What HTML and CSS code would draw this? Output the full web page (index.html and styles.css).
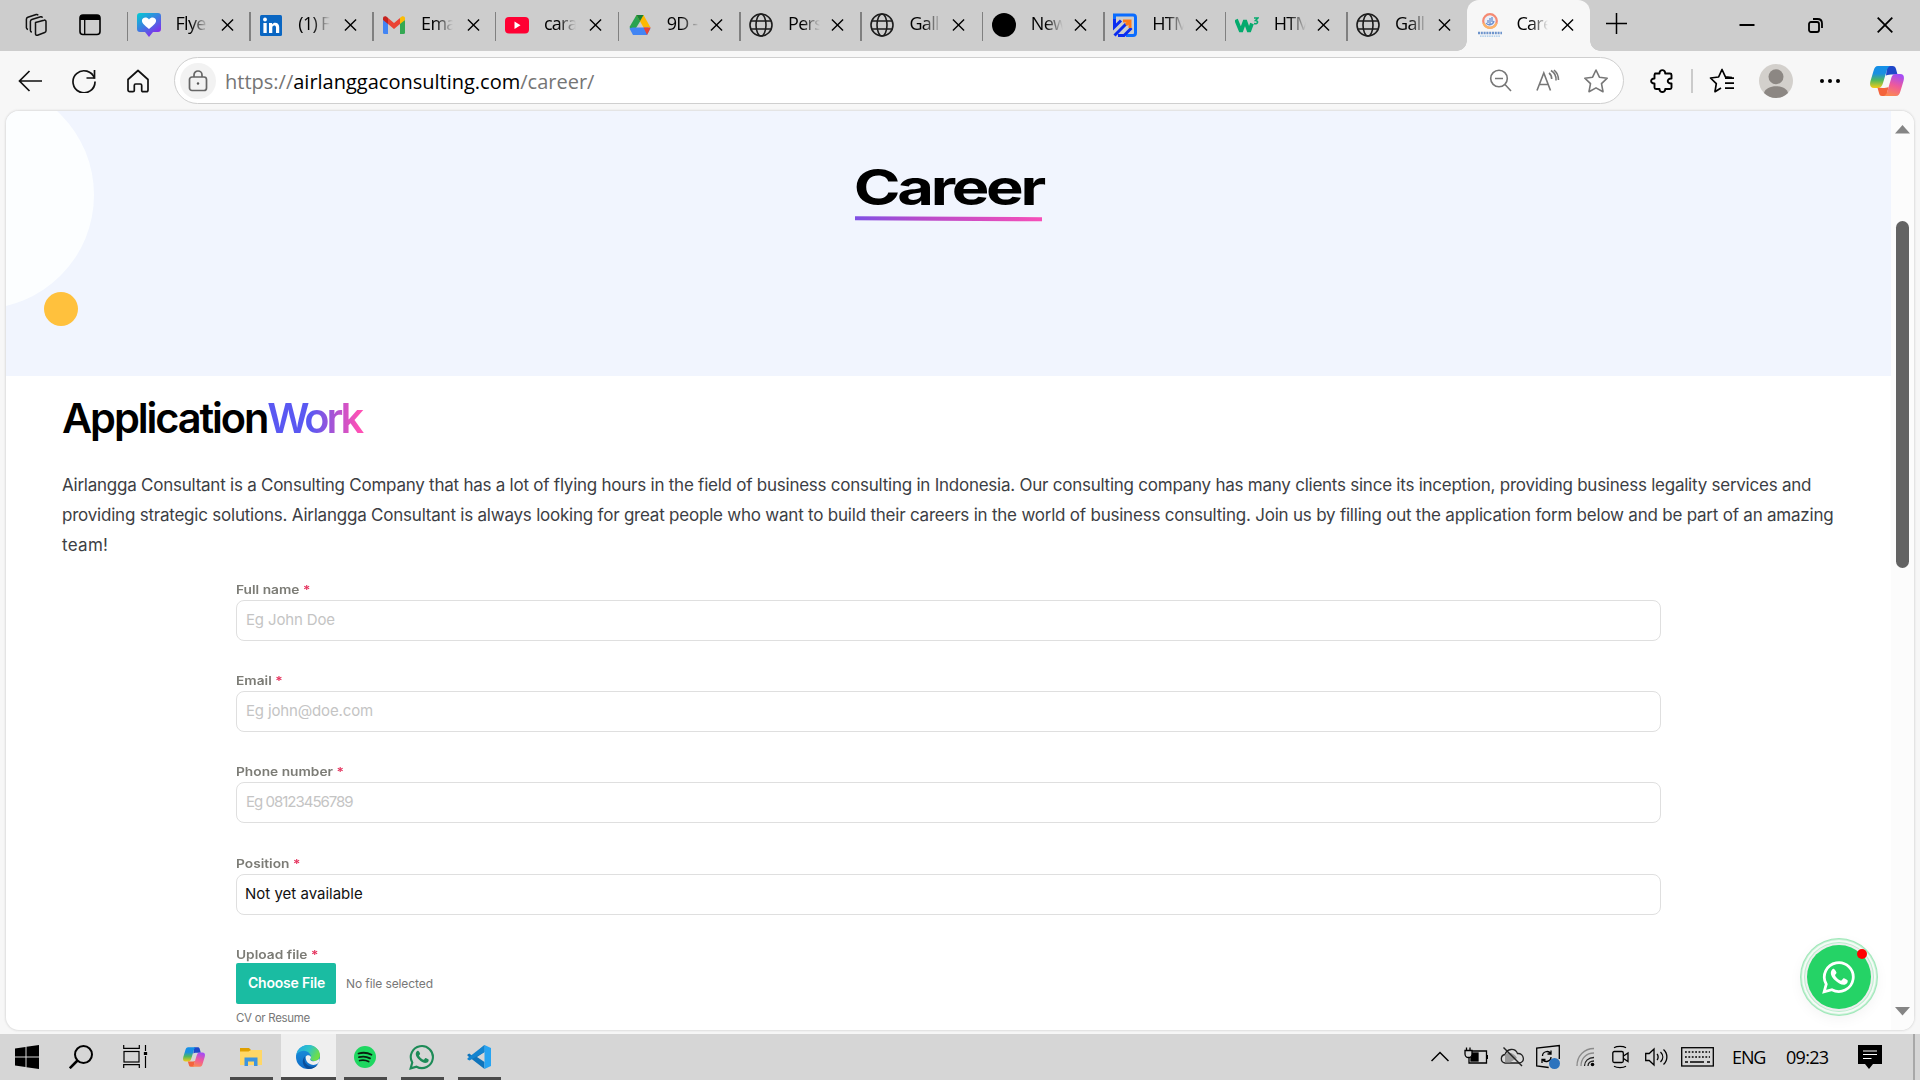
FILE: index.html
```
<!DOCTYPE html>
<html lang="en">
<head>
<meta charset="utf-8">
<title>Career</title>
<link rel="stylesheet" href="styles.css">
</head>
<body>
<svg class="defs" width="0" height="0" aria-hidden="true">
  <defs>
    <linearGradient id="cpA" x1="0" y1="0" x2="0" y2="1"><stop offset="0" stop-color="#1490e8"/><stop offset=".35" stop-color="#1b8fe0"/><stop offset=".65" stop-color="#52b85c"/><stop offset="1" stop-color="#f7cb16"/></linearGradient>
    <linearGradient id="cpB" x1=".6" y1="0" x2=".3" y2="1"><stop offset="0" stop-color="#a54cf5"/><stop offset=".5" stop-color="#ef5a9a"/><stop offset="1" stop-color="#fb8a52"/></linearGradient>
    <linearGradient id="fl" x1="0" y1="0" x2=".7" y2="1"><stop offset="0" stop-color="#00cdd2"/><stop offset=".5" stop-color="#3b7fe0"/><stop offset="1" stop-color="#8a25ee"/></linearGradient>
    <linearGradient id="edA" x1="0" y1="0" x2="1" y2=".4"><stop offset="0" stop-color="#1fa6e8"/><stop offset=".55" stop-color="#2fc4c8"/><stop offset="1" stop-color="#6ede48"/></linearGradient>
    <linearGradient id="edB" x1="0" y1="0" x2="0" y2="1"><stop offset="0" stop-color="#1b93dc"/><stop offset="1" stop-color="#0f6cc8"/></linearGradient>
    <symbol id="x" viewBox="0 0 14 14"><path d="M1 1l12 12M13 1L1 13" fill="none" stroke="#000" stroke-width="1.5"/></symbol>
    <symbol id="globe" viewBox="0 0 24 24"><g fill="none" stroke="#1c1c1c" stroke-width="1.6"><circle cx="12" cy="12" r="11"/><ellipse cx="12" cy="12" rx="5" ry="11"/><path d="M2 8h20M2 16h20"/></g></symbol>
    <symbol id="copilot" viewBox="0 0 34 30">
      <path d="M17 0h5.500c2 0 3 1 3.500 3l1.500 5.500h-4c-3.500 0-5.500 0-7.500 1z" fill="#1f47c9"/>
      <path d="M8 0h12c-2 1-3 3-4 7l-3 10c-1 3.500-2.500 5-5 5H4c-4 0-4.500-3-3.500-7L3.500 5C4.500 1.500 5.500 0 8 0z" fill="url(#cpA)"/>
      <path d="M16.500 30H12c-2 0-2.500-1-3-3l-1.500-5.200c3 0 8 .7 11-.8z" fill="#f4643c"/>
      <path d="M26 30H14c2-1 3-3 4-7l3-10c1-4 2.500-5 5-5h4c4 0 4.500 3 3.500 7l-3 10c-1 3.500-2 5-4.500 5z" fill="url(#cpB)"/>
    </symbol>
    <symbol id="wa" viewBox="0 0 32 32">
      <path d="M2 30l2-7.200A13.600 13.600 0 1 1 9.300 28z" fill="none" stroke="currentColor" stroke-width="2.600" stroke-linejoin="miter"/>
      <path d="M11.600 8.600c-.7-.6-1.600-.3-2.200.5-2.600 3.300 0 7.300 2.800 10 2.900 2.800 6.500 4.700 9.200 4.100 1.800-.4 3.100-2 2.800-3.900-.1-.5-3.300-2.200-3.900-2.100-.8.2-1.400 2-2.200 2.200-1.800-.2-5.300-3.200-5.800-5.100.1-.7 1.400-1.400 1.400-2.200 0-.6-1.300-3.100-2.100-3.500z" fill="currentColor"/>
    </symbol>
  </defs>
</svg>

<div class="browser">
  <header class="tabstrip">
    <div class="tabtools">
      <svg width="26" height="26" viewBox="0 0 26 26" fill="none" stroke="#111" stroke-width="1.500" stroke-linejoin="round"><path d="M11.500 10.500l8.500-2.300c1-.3 2 .3 2 1.300v9.200c0 .8-.5 1.500-1.300 1.800l-7.200 2.700c-1 .4-2-.3-2-1.300z"/><path d="M8 20c-1 0-1.600-.7-1.600-1.600V9.500c0-1 .5-1.700 1.400-2l8.800-2.700c.8-.2 1.600.2 1.900.9"/><path d="M4 17.500c-1-.2-1.600-.8-1.600-1.700V7.200c0-1 .5-1.700 1.400-2l8.400-2.700c.8-.2 1.600.2 1.900.9"/></svg>
      <svg width="22" height="22" viewBox="0 0 22 22"><rect x="1" y="1" width="20" height="19.500" rx="3" fill="none" stroke="#000" stroke-width="1.600"/><path d="M1 6V4a3 3 0 0 1 3-3h14a3 3 0 0 1 3 3v2z"/><path d="M5.700 6v14.500" stroke="#000" stroke-width="1.300"/></svg>
    </div>
    <div class="tab wide"><svg class="fav" viewBox="0 0 24 24"><path d="M3 0h18a3 3 0 0 1 3 3v13a3 3 0 0 1-3 3h-5l-4 5-4-5H3a3 3 0 0 1-3-3V3a3 3 0 0 1 3-3z" fill="url(#fl)"/><path d="M12 16C7 12 4.500 9.500 5 7c.6-3 5-3.500 7-.5C14 3.500 18.400 4 19 7c.5 2.500-2 5-7 9z" fill="#fff"/></svg><span class="label">Flye</span><svg class="close"><use href="#x"/></svg></div>
    <div class="tab wide"><svg class="fav" viewBox="0 0 24 24"><rect x="1" y="2" width="22" height="21" rx="1.500" fill="#0a66c2"/><circle cx="6" cy="6.500" r="1.900" fill="#fff"/><path d="M4.400 10h3.300v10H4.400zM10 10h3v1.500c2-3 7.200-2 7.200 2.500v6H17v-5.500c0-3-3.700-2.500-3.700 0V20H10z" fill="#fff"/></svg><span class="label">(1) F</span><svg class="close"><use href="#x"/></svg></div>
    <div class="tab wide"><svg class="fav" viewBox="0 0 24 24"><path d="M1 7v12.500A1.500 1.500 0 0 0 2.500 21H6V9z" fill="#4285f4"/><path d="M23 7v12.500a1.500 1.500 0 0 1-1.500 1.500H18V9z" fill="#34a853"/><path d="M18 5v6l5-4V5.500C23 3 20 2.500 18 5z" fill="#fbbc04"/><path d="M6 5v6l6 5 6-5V5l-6 5z" fill="#ea4335"/><path d="M1 5.500V7l5 4V5C4 2.500 1 3 1 5.500z" fill="#c5221f"/></svg><span class="label">Ema</span><svg class="close"><use href="#x"/></svg></div>
    <div class="tab wide"><svg class="fav" viewBox="0 0 24 24"><rect y="4" width="24" height="16.500" rx="4" fill="#ff0033"/><path d="M9.500 8.500l6 3.700-6 3.700z" fill="#fff"/></svg><span class="label">cara</span><svg class="close"><use href="#x"/></svg></div>
    <div class="tab"><svg class="fav" viewBox="0 0 24 24"><path d="M8.500 2h7L12 8.500 5 20l-3.500-6z" fill="#2aa350"/><path d="M8.500 2h7l7 12.500h-7z" fill="#fdb900"/><path d="M5 22l-3.500-6.500 3-1h15l3 1L19 22z" fill="#4285f4"/><path d="M15.500 14.500h7.200L19 22z" fill="#ea4335"/><path d="M8.500 2h7L12 8.300z" fill="#188038"/></svg><span class="label">9D -</span><svg class="close"><use href="#x"/></svg></div>
    <div class="tab"><svg class="fav"><use href="#globe"/></svg><span class="label">Pers</span><svg class="close"><use href="#x"/></svg></div>
    <div class="tab"><svg class="fav"><use href="#globe"/></svg><span class="label">Gall</span><svg class="close"><use href="#x"/></svg></div>
    <div class="tab"><svg class="fav" viewBox="0 0 24 24"><circle cx="12" cy="12" r="12"/></svg><span class="label">New</span><svg class="close"><use href="#x"/></svg></div>
    <div class="tab"><svg class="fav" viewBox="0 0 24 24" fill="none" stroke-width="3"><path d="M1.500 9V2H20c1.500 0 2.500 1 2.500 2.500V20c0 1.500-1 2.500-2.500 2.500h-7" stroke="#0a6cff"/><path d="M1.500 6v8L8 7.500M1.500 22.500L13 11M5 22.500h6L18.500 15" stroke="#0b2cf0"/><path d="M10 8h7v7M17 8l-4 4" stroke="#ff7a1a"/></svg><span class="label">HTM</span><svg class="close"><use href="#x"/></svg></div>
    <div class="tab"><svg class="fav" viewBox="0 0 24 24" fill="none" stroke="#04aa6d"><path d="M1 6.500l5 12 4-11 4 11 3-8" stroke-width="3.800" stroke-linejoin="bevel"/><path d="M19 5h4l-2.500 2.500c3 0 3 4-1.500 3" stroke-width="1.500"/></svg><span class="label">HTM</span><svg class="close"><use href="#x"/></svg></div>
    <div class="tab"><svg class="fav"><use href="#globe"/></svg><span class="label">Gall</span><svg class="close"><use href="#x"/></svg></div>
    <div class="tab active"><svg class="fav" viewBox="0 0 24 24"><circle cx="12" cy="8" r="6.800" fill="#e8effa" stroke="#f58a72" stroke-width="2.200"/><path d="M5.500 10a6.800 6.800 0 0 0 13 0" fill="none" stroke="#fbb569" stroke-width="2.200"/><path d="M8 10c2 3 7 2 8-2M10 10V7M12 11V5M14 9V4" fill="none" stroke="#6a8fd0" stroke-width="1.300"/><path d="M0 20h24" stroke="#6d94cc" stroke-width="2.400" stroke-dasharray="2 .8"/><path d="M2 23.200h20" stroke="#9cc4e8" stroke-width="1.200" stroke-dasharray="1.500 .8"/></svg><span class="label">Care</span><svg class="close"><use href="#x"/></svg></div>
    <svg class="newtab" width="21" height="21" viewBox="0 0 21 21"><path d="M10.500 0v21M0 10.500h21" stroke="#000" stroke-width="1.500"/></svg>
    <div class="winctl">
      <svg width="16" height="16" viewBox="0 0 16 16"><path d="M.5 8h15" stroke="#000" stroke-width="2"/></svg>
      <svg width="16" height="16" viewBox="0 0 16 16" fill="none" stroke="#000" stroke-width="1.800"><rect x="1" y="5" width="10" height="10" rx="2"/><path d="M5 2h4.500C13 2 14 4 14 6.500V11"/></svg>
      <svg width="16" height="16" viewBox="0 0 16 16"><path d="M.7.700l14.600 14.600M15.300.700L.7 15.300" stroke="#000" stroke-width="1.800"/></svg>
    </div>
  </header>

  <nav class="toolbar">
    <div class="navbtns">
      <svg width="24" height="24" viewBox="0 0 24 24" fill="none" stroke="#111" stroke-width="1.700"><path d="M24 12H1.500M11.500 2L1.500 12l10 10"/></svg>
      <svg width="24" height="24" viewBox="0 0 24 24" fill="none" stroke="#111" stroke-width="1.700"><path d="M22.500 9.500a11 11 0 1 0 .5 3"/><path d="M22.500 1v8h-8"/></svg>
      <svg width="24" height="24" viewBox="0 0 24 24" fill="none" stroke="#111" stroke-width="1.700" stroke-linejoin="round"><path d="M2 10.500L12 1.500l10 9V21c0 1-.7 1.700-1.700 1.700H17c-.8 0-1.300-.5-1.300-1.300v-5c0-.8-.5-1.400-1.300-1.400H9.600c-.8 0-1.300.6-1.300 1.400v5c0 .8-.5 1.300-1.300 1.300H3.700c-1 0-1.700-.7-1.700-1.700z"/></svg>
    </div>
    <div class="address">
      <span class="lock"><svg width="20" height="22" viewBox="0 0 20 22" fill="none" stroke="#666" stroke-width="1.700"><rect x="1.500" y="7" width="17" height="13.500" rx="2.500"/><path d="M6 7V5a4 4 0 0 1 8 0v2"/><circle cx="10" cy="13.500" r="1.200" fill="#555" stroke="none"/></svg></span>
      <span class="url">https://<b>airlanggaconsulting.com</b>/career/</span>
      <span class="addr-icons">
        <svg width="24" height="24" viewBox="0 0 24 24" fill="none" stroke="#777" stroke-width="1.600"><circle cx="10" cy="9.500" r="8.300"/><path d="M6 9.500h8M16 15.500l6 6.500"/></svg>
        <svg width="24" height="24" viewBox="0 0 24 24" fill="none" stroke="#777" stroke-width="1.600"><path d="M1 21.500L7.800 4l6.700 17.500M3.500 15.500H12M13 4c2 1.500 2.700 3.500 2.700 6M15 1.500c4 2.500 5.500 5.500 5 10M18 1c3 2.500 4.500 6 4.500 10"/></svg>
        <svg width="26" height="26" viewBox="0 0 26 26" fill="none" stroke="#777" stroke-width="1.600" stroke-linejoin="round"><path d="M13 2l3.400 7.200 7.800 1-5.700 5.500 1.500 8L13 19.900l-7 3.800 1.500-8L1.800 10.200l7.800-1z"/></svg>
      </span>
    </div>
    <div class="tools">
      <svg width="24" height="24" viewBox="0 0 24 24" fill="none" stroke="#000" stroke-width="1.900" stroke-linejoin="round"><path d="M5 4.500h4.500c-.3-4.500 6-4.500 5.700 0H20c1 0 1.500.5 1.500 1.500V9.500c-5-.5-5 5.500 0 5V18.500c0 1-.5 1.500-1.500 1.500h-4.800c.3 4-6 4-5.700 0H6c-1 0-1.500-.5-1.500-1.500v-4c-4.500.3-4.500-5.300 0-5V6z"/></svg>
      <i class="rule"></i>
      <svg width="26" height="26" viewBox="0 0 26 26" fill="none" stroke="#000" stroke-width="1.700" stroke-linejoin="round"><path d="M23 9.500l-6.600-.6L13 1.500 9.600 9 1.500 10l5.800 5.700-1.300 8L12 20M16 10.200h9M16 15.200h9M16 20.200h9"/></svg>
      <svg class="avatar" width="34" height="34" viewBox="0 0 34 34"><circle cx="17" cy="17" r="17" fill="#d3d0cc"/><circle cx="17" cy="12.700" r="7.500" fill="#8c8783"/><path d="M5 29c2-9 22-9 24 0a17 17 0 0 1-24 0z" fill="#8c8783"/></svg>
      <svg width="20" height="6" viewBox="0 0 20 6"><circle cx="2" cy="3" r="2"/><circle cx="10" cy="3" r="2"/><circle cx="18" cy="3" r="2"/></svg>
      <svg width="34" height="30"><use href="#copilot"/></svg>
    </div>
  </nav>

  <div class="viewport">
    <main class="page">
      <section class="hero">
        <i class="blob"></i><i class="dot"></i>
        <h1><span>Career</span></h1>
        <svg width="187" height="6" viewBox="0 0 187 6"><defs><linearGradient id="ul"><stop offset="0" stop-color="#7f50e4"/><stop offset=".35" stop-color="#b74bcb"/><stop offset="1" stop-color="#f64fb8"/></linearGradient></defs><path d="M0 .3L187 1.200V5.300L0 4.200z" fill="url(#ul)"/></svg>
      </section>
      <section class="content">
        <h2>Application<span>Work</span></h2>
        <p class="intro"><span class="l1">Airlangga Consultant is a Consulting Company that has a lot of flying hours in the field of business consulting in Indonesia. Our consulting company has many clients since its inception, providing business legality services and</span> <span class="l2">providing strategic solutions. Airlangga Consultant is always looking for great people who want to build their careers in the world of business consulting. Join us by filling out the application form below and be part of an amazing</span> <span class="l3">team!</span></p>
        <form class="form">
          <div class="field"><label><span>Full name <em>*</em></span></label><div class="input ph">Eg John Doe</div></div>
          <div class="field"><label><span>Email <em>*</em></span></label><div class="input ph">Eg john@doe.com</div></div>
          <div class="field"><label><span>Phone number <em>*</em></span></label><div class="input ph num">Eg 08123456789</div></div>
          <div class="field"><label><span>Position <em>*</em></span></label><div class="input">Not yet available</div></div>
          <div class="field"><label><span>Upload file <em>*</em></span></label><div class="upload"><span class="choose">Choose File</span><span class="none">No file selected</span></div><div class="hint">CV or Resume</div></div>
        </form>
      </section>
      <div class="chat"><svg width="34" height="34"><use href="#wa"/></svg><i></i></div>
    </main>
    <aside class="scroll">
      <svg width="15" height="9" viewBox="0 0 15 9"><path d="M7.500 0L15 8.500H0z" fill="#858585"/></svg>
      <i class="thumb"></i>
      <svg width="15" height="9" viewBox="0 0 15 9"><path d="M7.500 8.500L15 0H0z" fill="#858585"/></svg>
    </aside>
  </div>
</div>

<footer class="taskbar">
  <div class="apps">
    <div class="app a-start"><svg width="24" height="24" viewBox="0 0 24 24"><path d="M0 3.500l10.500-1.500v9.500H0zM11.500 1.800L24 0v11.500H11.500zM0 12.500h10.500V22L0 20.500zM11.500 12.500H24V24l-12.500-1.800z"/></svg></div>
    <div class="app a-search"><svg width="24" height="24" viewBox="0 0 24 24" fill="none" stroke="#000"><circle cx="14.500" cy="9.500" r="8.500" stroke-width="2"/><path d="M8.500 15.500L.8 23.200" stroke-width="2.600"/></svg></div>
    <div class="app a-view"><svg width="25" height="24" viewBox="0 0 25 24" fill="none" stroke="#000" stroke-width="1.200"><rect x="1" y="6.500" width="15" height="10.500"/><path d="M.7 0v3.300h15.600V0M.7 23v-3.300h15.600V23M22.500 0v6M22.500 11v12"/><path d="M22.500 7v3" stroke-width="3.300"/></svg></div>
    <div class="app a-cop"><svg width="22" height="20"><use href="#copilot"/></svg></div>
    <div class="app run"><svg width="22" height="20" viewBox="0 0 22 20"><path d="M0 1h9l2 2v3H0z" fill="#e0a000"/><path d="M0 4.500h8.500L11 3h11v15H0z" fill="#ffd766"/><path d="M4.500 19v-8.500h13V19H14v-4.500H8V19z" fill="#3d94de"/></svg></div>
    <div class="app run current"><svg width="24" height="24" viewBox="0 0 24 24"><circle cx="12" cy="12" r="12" fill="url(#edB)"/><path d="M.3 9.500C2 3.500 6.500 0 12 0c7 0 12 5 12 10 0 4-2.800 6-6 6-2.500 0-4-1-3.400-2.200C16.500 10 12 5.500 7.500 5.700 4 5.900 1.500 7.500.3 9.500z" fill="url(#edA)"/><path d="M9.500 11C7 15 9.500 20.500 15 21.700c2.500.5 5-.5 7.200-2.700C20 22.200 16.500 24 12.500 24 7 23 4.500 14 9.500 11z" fill="#0b4f9a"/><path d="M9.700 11.500c2-2.500 5.300-1.200 5.300 1 0 .8-1.200 1.500-.6 2.400 1 1.700 6 2 9-1.300.5 2-.2 4-1.600 5C17 22 9 18.500 9.700 11.500z" fill="#efefef"/></svg></div>
    <div class="app run"><svg width="22" height="22" viewBox="0 0 22 22"><circle cx="11" cy="11" r="11" fill="#1ed760"/><path d="M4.500 7.500c4.500-1.300 9-.9 13 1.200M5 11.200c4-1 7.600-.7 11 1.200M5.600 14.500c3.300-.8 6.200-.5 9 1" fill="none" stroke="#0a2010" stroke-width="1.800" stroke-linecap="round"/></svg></div>
    <div class="app run"><svg class="wa" width="26" height="26"><use href="#wa"/></svg></div>
    <div class="app run"><svg width="24" height="24" viewBox="0 0 24 24"><path d="M17.500 0L5.500 11 2.300 8.500.5 9.500v1.300L17.500 24V17L10 12l7.500-5z" fill="#0f74bb"/><path d="M.5 14.500v-1.200L17.500 0V7l-15 8.500z" fill="#1484cf"/><path d="M17.500 0L24 3v18l-6.500 3z" fill="#27a4f2"/></svg></div>
  </div>
  <div class="tray">
    <svg width="18" height="24" viewBox="0 0 18 24" fill="none" stroke="#000" stroke-width="1.500"><path d="M.5 16L9 7.500l8.500 8.500"/></svg>
    <svg width="24" height="24" viewBox="0 0 24 24" fill="none" stroke="#000" stroke-width="1.300"><path d="M8 6h14.500v12H5v-5"/><path d="M23.500 10v4"/><rect x="7" y="8" width="7" height="8" fill="#000"/><path d="M1 5.500h7V9a3.500 3.500 0 0 1-7 0zM2.500 2.500v3M6 2.500v3" fill="#d6d6d6"/></svg>
    <svg width="24" height="24" viewBox="0 0 24 24" fill="#d9d9d9" stroke="#222" stroke-width="1.300"><path d="M5 18a4.300 4.300 0 0 1 0-8.500C7 3.500 15 2.500 17.500 8.500c7-.5 8 9.500 1.500 9.500z"/><path d="M5 10c3-4 9-2 12 3l-7 4.500H5z" fill="#999" stroke="none"/><path d="M3.500 2.500L22 21" stroke-width="1.500"/></svg>
    <svg width="24" height="26" viewBox="0 0 24 26" fill="none" stroke="#000" stroke-width="1.300"><path d="M23.300 15V1.500L.7 4v18l12 1.500"/><path d="M6.500 12c0-4.500 6-6 8-2.500M15 6.500v3.500h-3.500M15 13c0 4.500-6 6-8.500 2.500M6 19v-3.500h3.500"/><circle cx="18.500" cy="19.500" r="5.500" fill="#2d73bd" stroke="none"/></svg>
    <svg width="19" height="24" viewBox="0 0 19 24" fill="none" stroke-width="1.300"><path d="M1 21C1 11 8 3.500 18 3.500M5 21c0-7.500 5-13 13-13" stroke="#8b8b8b"/><path d="M8.500 21c0-5 4-8.500 9.500-8.500M12 21c0-3 2.500-5 6-5" stroke="#222"/><circle cx="16.500" cy="19.500" r="1.800" fill="#000"/></svg>
    <svg width="17" height="24" viewBox="0 0 17 24" fill="none" stroke="#000" stroke-width="1.300"><rect x=".8" y="6.500" width="10.500" height="11" rx="1.500"/><path d="M11.500 11l4.500-3v8.500l-4.500-3M2 2.700c3-1.700 9-1.700 12 0M2 21.300c3 1.700 9 1.700 12 0"/></svg>
    <svg width="23" height="24" viewBox="0 0 23 24" fill="none" stroke="#000" stroke-width="1.300"><path d="M.7 8.500h3.500L9 4v16l-4.800-4.500H.700zM12 9c1.500 1.500 1.500 4.500 0 6M15.500 7c3 3 3 7 0 10M18.500 4.500c4.500 4 4.500 11 0 15"/></svg>
    <svg width="33" height="20" viewBox="0 0 33 20" fill="none" stroke="#000" stroke-width="1.300"><rect x=".7" y=".7" width="31.600" height="18.300"/><path d="M4 5h25M4 10h25" stroke-dasharray="1.800 1.600"/><path d="M4 15h3M9 15h14M26 15h3"/></svg>
    <span class="lang">ENG</span>
    <span class="clock">09:23</span>
    <svg width="24" height="24" viewBox="0 0 24 24"><path d="M0 0h24v19h-9l-4 5-4-5H0z"/><path d="M5 6h14M5 9.500h14M5 13.500h8.500" stroke="#fff" stroke-width="1.200"/></svg>
    <i class="peek"></i>
  </div>
</footer>
</body>
</html>
```
FILE: styles.css
```
* { box-sizing: border-box; }
body { margin: 0; width: 1920px; height: 1080px; overflow: hidden; background: #f7f7f7; font-family: "Open Sans", "Noto Sans", sans-serif; color: #000; display: flex; flex-direction: column; }
svg { display: block; flex: none; }
.defs { position: absolute; }
.browser { height: 1034px; display: flex; flex-direction: column; }

.tabstrip { height: 51px; flex: none; background: #cdcdcd; display: flex; }
.tabtools { width: 126.500px; flex: none; display: flex; gap: 29px; padding: 12px 0 0 24px; }
.tabtools svg:last-child { margin-top: 2px; }
.tab { width: 121.400px; flex: none; display: flex; padding-left: 9px; position: relative; }
.tab::before { content: ""; position: absolute; left: 0; top: 12px; width: 1.500px; height: 29px; background: #808080; }
.tab.wide { width: 122.800px; }
.fav { width: 24px; height: 24px; margin: 13px 15px 0 1px; }
.label { width: 32px; margin-top: 10px; font-size: 18px; line-height: 26px; letter-spacing: -.7px; white-space: nowrap; -webkit-mask-image: linear-gradient(90deg, #000 45%, transparent 100%); mask-image: linear-gradient(90deg, #000 45%, transparent 100%); }
.close { width: 13px; height: 14px; margin: 18px 0 0 11px; }
.wide .close { margin-left: 13.500px; }
.tab.active { width: 123px; background: #f7f7f7; border-radius: 12px 12px 0 0; padding-left: 10px; }
.active .fav { margin-right: 14px; }
.active .close { margin-left: 13px; }
.tab.active::before, .tab.active::after { top: auto; bottom: 0; width: 10px; height: 10px; background: radial-gradient(circle at 0 0, transparent 9.500px, #f7f7f7 10px); left: -10px; }
.tab.active::after { content: ""; position: absolute; left: 123px; background: radial-gradient(circle at 100% 0, transparent 9.500px, #f7f7f7 10px); }
.newtab { margin: 13px 0 0 16px; }
.winctl { margin-left: auto; display: flex; gap: 53px; padding: 17px 27px 0 0; }

.toolbar { height: 59px; flex: none; display: flex; align-items: center; padding-left: 18px; }
.navbtns { display: flex; gap: 30px; width: 156px; }
.address { width: 1450px; height: 47px; border: 1.500px solid #cfcfcf; border-radius: 24px; background: #fff; display: flex; align-items: center; padding-left: 5px; }
.lock { width: 36px; height: 36px; border-radius: 50%; background: #f2f2f2; display: flex; align-items: center; justify-content: center; }
.url { margin-left: 9px; font-size: 20px; line-height: 28px; color: #757575; white-space: nowrap; padding-top: 2px; }
.url b { color: #000; font-weight: 400; }
.addr-icons { margin-left: auto; display: flex; gap: 23px; padding-right: 14px; align-items: center; }
.tools { display: flex; align-items: center; padding-left: 26px; }
.rule { width: 1.500px; height: 24px; background: #cbcbcb; margin: 0 16px 0 17px; }
.avatar { margin: 0 27px 0 24px; }
.tools svg:last-child { margin-left: 30px; }

.viewport { width: 1908px; height: 919px; margin: 1px 0 0 6px; border-radius: 13px; background: #fff; display: flex; overflow: hidden; box-shadow: 0 0 2px 1px #dedede; flex: none; }
.page { width: 1885px; position: relative; flex: none; font-family: Inter, "Liberation Sans", sans-serif; }
.hero { height: 265px; background: #f1f5fe; position: relative; overflow: hidden; display: flex; flex-direction: column; align-items: center; }
.blob { position: absolute; left: -140px; top: -30px; width: 228px; height: 228px; border-radius: 50%; background: #fcfeff; }
.dot { position: absolute; left: 38px; top: 181px; width: 34px; height: 34px; border-radius: 50%; background: #ffc13d; }
h1 { margin: 49px 0 0; font-size: 49px; line-height: 56px; font-weight: 650; letter-spacing: -2.500px; }
h1 span { display: inline-block; transform: scaleX(1.290); }
.content { padding: 18px 0 0 56px; }
h2 { margin: 0; height: 48px; font-size: 41.500px; line-height: 48px; font-weight: 600; letter-spacing: -2.100px; display: flex; }
h2 span { letter-spacing: -3.100px; padding-right: 3px; background: linear-gradient(90deg, #5a58f2 45%, #ff50b5 95%); -webkit-background-clip: text; background-clip: text; color: transparent; }
.intro { margin: 28px 0 0; font-size: 17px; line-height: 30px; color: #3c3e44; }
.intro span { display: block; white-space: nowrap; }
.l1 { letter-spacing: -.243px; }
.l2 { letter-spacing: -.219px; }
.l3 { letter-spacing: .300px; }
.form { margin: 21px 0 0 174px; width: 1425px; }
.field { height: 91.200px; }
label { display: block; height: 19px; font-size: 12px; line-height: 17px; font-weight: 600; color: #7c7c76; }
label span { display: inline-block; transform: scaleX(1.145); transform-origin: 0 0; white-space: nowrap; }
label em { font-style: normal; color: #e5335e; }
.input { height: 41px; border: 1px solid #dfdfdf; border-radius: 8px; font-size: 15px; line-height: 38px; padding-left: 8px; color: #111; }
.ph { color: #c4c4c4; letter-spacing: -.150px; padding-left: 9px; }
.num { letter-spacing: -1px; }
.upload { display: flex; align-items: center; margin-top: -2px; }
.choose { width: 100px; height: 41px; background: #1abca2; border-radius: 2px; color: #fff; font-size: 14px; font-weight: 600; letter-spacing: -.200px; line-height: 39px; text-align: center; padding-left: 1px; }
.none { margin-left: 10px; font-size: 12px; color: #777; letter-spacing: -.100px; }
.hint { font-size: 11.500px; color: #777; letter-spacing: -.300px; line-height: 16px; margin-top: 6px; }
.chat { position: absolute; left: 1801px; top: 834px; width: 64px; height: 64px; border-radius: 50%; background: #25d366; color: #fff; display: flex; align-items: center; justify-content: center; box-shadow: 0 0 0 2px #eee, 0 0 0 3px #b9efcc, 0 0 0 5px #f4fbf6, 0 0 0 6px #c4efd3, 0 0 0 7px #9fe8b9, 0 4px 14px 6px rgba(0,0,0,.05); }
.chat i { position: absolute; left: 50px; top: 4px; width: 10px; height: 10px; border-radius: 50%; background: #f00; }
.scroll { flex: 1; background: #fcfcfc; display: flex; flex-direction: column; align-items: center; padding: 14px 1px 14px 0; }
.thumb { width: 13px; height: 347px; border-radius: 7px; background: #636363; margin: 87px 0 auto; }

.taskbar { height: 46px; background: #d6d6d6; display: flex; justify-content: space-between; }
.apps { display: flex; }
.app { height: 46px; display: flex; align-items: center; justify-content: center; }
.a-start, .a-search, .a-view { width: 54px; }
.a-cop { width: 64px; }
.run { width: 43px; border-bottom: 3px solid #4a4a4a; border-top: 3px solid transparent; margin: 0 4px; padding-right: 1px; }
.run + .run { margin-left: 10px; }
.run.current { width: 55px; margin-left: 4px; background: #efefef; border-top-color: #efefef; }
.run.current + .run { margin-left: 4px; }
.wa { color: #1d8b57; }
.tray { display: flex; align-items: center; font-size: 18px; width: 489px; }
.tray svg { margin-right: 12px; }
.tray svg:nth-of-type(1) { margin-right: 15px; }
.tray svg:nth-of-type(4) { margin-right: 16px; }
.tray svg:nth-of-type(5) { margin-right: 17px; }
.tray svg:nth-of-type(6) { margin-right: 16px; }
.tray svg:nth-of-type(7) { margin-right: 13px; }
.tray svg:nth-of-type(8) { margin-right: 18px; }
.lang { width: 54px; letter-spacing: -1.100px; }
.clock { width: 72px; letter-spacing: -.700px; }
.peek { width: 2px; height: 46px; background: #a8a8a8; margin-left: 19px; }
```
